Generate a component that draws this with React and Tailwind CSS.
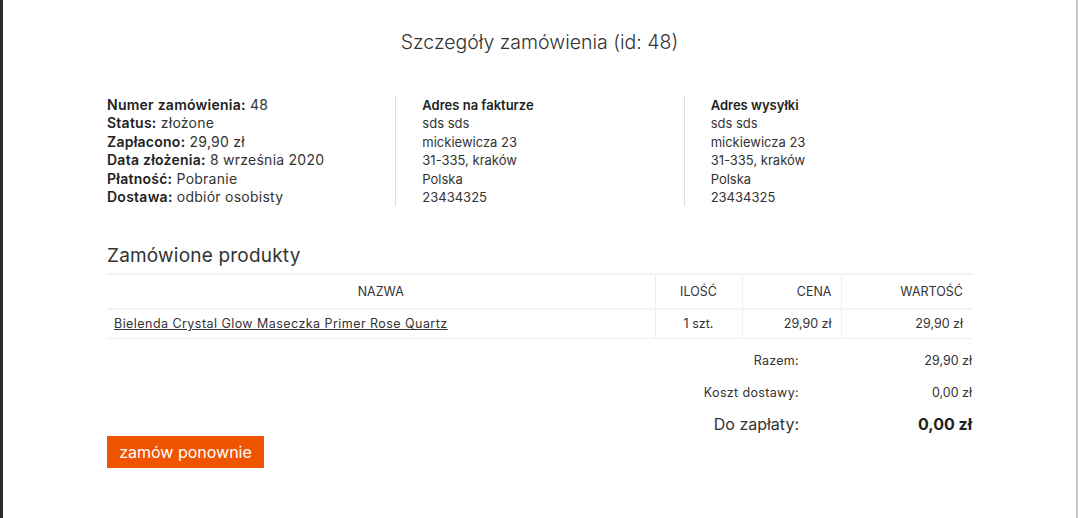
export default function App() {
  const info = [
    ["Numer zamówienia:", "48"],
    ["Status:", "złożone"],
    ["Zapłacono:", "29,90 zł"],
    ["Data złożenia:", "8 września 2020"],
    ["Płatność:", "Pobranie"],
    ["Dostawa:", "odbiór osobisty"],
  ];
  const adres = ["sds sds", "mickiewicza 23", "31-335, kraków", "Polska", "23434325"];

  return (
    <div
      className="min-h-[518px] border-l-[3px] border-r-2 border-l-[#2b2b2b] border-r-[#c8c8c8] bg-white text-[#333]"
      style={{ fontFamily: "Inter, 'Noto Sans', sans-serif" }}
    >
      <div className="mx-auto w-[865px] pt-[28px]">
        <h1 className="text-center text-[19.5px] leading-[28px] font-light">
          Szczegóły zamówienia (id: 48)
        </h1>

        {/* dane zamówienia */}
        <div className="mt-[40px] grid grid-cols-3 text-[13px] leading-[18.4px]">
          <div className="text-[14px] tracking-[0.25px]">
            {info.map(([k, v]) => (
              <div key={k}>
                <span className="font-semibold text-[#222]">{k}</span> {v}
              </div>
            ))}
          </div>
          <div className="border-l border-[#dddddd] pl-[26px]">
            <div className="font-semibold text-[#222]">Adres na fakturze</div>
            {adres.map((l) => (
              <div key={l}>{l}</div>
            ))}
          </div>
          <div className="border-l border-[#dddddd] pl-[26px]">
            <div className="font-semibold text-[#222]">Adres wysyłki</div>
            {adres.map((l) => (
              <div key={l}>{l}</div>
            ))}
          </div>
        </div>

        <h2 className="mt-[37px] text-[19px] leading-[26px] tracking-[0.2px]">Zamówione produkty</h2>

        <table className="mt-[4px] w-full border-collapse text-[12.5px]">
          <thead>
            <tr className="h-[35px] border-t-2 border-b-2 border-[#f3f3f3]">
              <th className="w-[548px] font-normal text-center">NAZWA</th>
              <th className="w-[87px] border-l border-[#eeeeee] font-normal text-center">ILOŚĆ</th>
              <th className="w-[99px] border-l border-[#eeeeee] pr-[9px] font-normal text-right">CENA</th>
              <th className="border-l border-[#eeeeee] pr-[9px] font-normal text-right">WARTOŚĆ</th>
            </tr>
          </thead>
          <tbody>
            <tr className="h-[29px] border-b border-[#eeeeee]">
              <td className="pl-[7px]">
                <a href="#" className="underline tracking-[0.45px]">
                  Bielenda Crystal Glow Maseczka Primer Rose Quartz
                </a>
              </td>
              <td className="border-l border-[#eeeeee] text-center">1 szt.</td>
              <td className="border-l border-[#eeeeee] pr-[9px] text-right">29,90 zł</td>
              <td className="border-l border-[#eeeeee] pr-[9px] text-right">29,90 zł</td>
            </tr>
          </tbody>
        </table>

        <div className="mt-[6px] grid grid-cols-[1fr_173px] text-[12.5px]">
          <div className="flex h-[32px] items-center justify-end tracking-[0.3px]">Razem:</div>
          <div className="flex h-[32px] items-center justify-end">29,90 zł</div>
          <div className="flex h-[32px] items-center justify-end tracking-[0.35px]">Koszt dostawy:</div>
          <div className="flex h-[32px] items-center justify-end">0,00 zł</div>
          <div className="flex h-[27px] items-end justify-end pb-[2px] text-[16px] leading-[20px]">Do zapłaty:</div>
          <div className="flex h-[27px] items-end justify-end pb-[2px] text-[16px] leading-[20px] font-bold text-[#222]">
            0,00 zł
          </div>
        </div>

        <button className="block h-[32px] w-[157px] bg-[#f05400] text-[16px] text-white">
          zamów ponownie
        </button>
      </div>
    </div>
  );
}
